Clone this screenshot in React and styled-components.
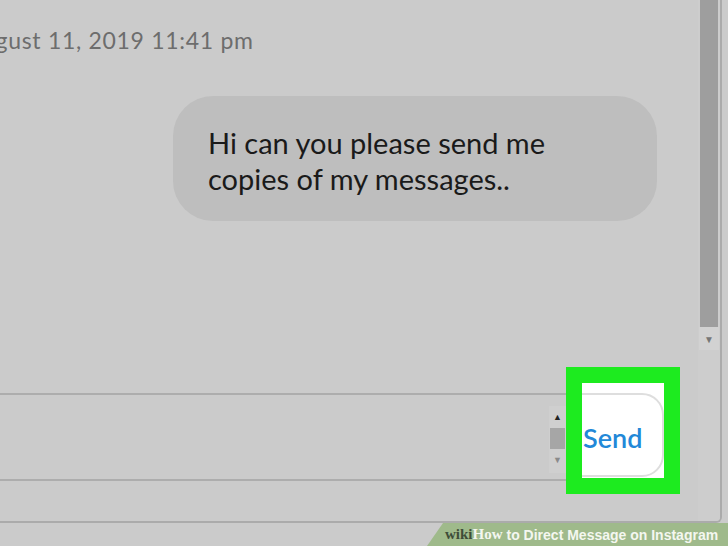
import React from "react";
import styled, { createGlobalStyle } from "styled-components";

const GlobalStyle = createGlobalStyle`
  html, body {
    margin: 0;
    padding: 0;
    background: #cbcbcb;
  }
  body {
    font-family: Lato, "Noto Sans", sans-serif;
  }
`;

const StPage = styled.div`
  width: 728px;
  height: 546px;
  overflow: hidden;
  display: flex;
  flex-direction: column;
  background: #cbcbcb;
`;

const StWindow = styled.div`
  width: 722px;
  height: 523px;
  box-sizing: border-box;
  display: flex;
  border-right: 2px solid #ababab;
  border-bottom: 2px solid #ababab;
  border-bottom-right-radius: 6px;
  overflow: hidden;
`;

const StMain = styled.div`
  flex: 1;
  min-width: 0;
  display: flex;
  flex-direction: column;
  overflow: hidden;
`;

const StDate = styled.div`
  margin: 25px 0 0 -34px;
  font-size: 23px;
  letter-spacing: 0.7px;
  line-height: 30px;
  color: #6d6d6d;
  white-space: nowrap;
`;

const StThread = styled.div`
  flex: 1;
  display: flex;
  flex-direction: column;
  align-items: flex-end;
  padding: 41px 41px 0 0;
`;

const StBubble = styled.div`
  width: 484px;
  box-sizing: border-box;
  padding: 29px 35px 24px;
  border-radius: 40px;
  background: #bebebe;
  color: #1a1a1a;
  font-size: 29px;
  line-height: 36px;
`;

const StComposer = styled.div`
  display: flex;
  align-items: center;
  padding-right: 18px;
  margin-bottom: 27px;
`;

const StInputField = styled.div`
  flex: 1;
  height: 88px;
  box-sizing: border-box;
  margin-top: 12px;
  border-top: 2px solid #adadad;
  border-bottom: 2px solid #adadad;
  display: flex;
  justify-content: flex-end;
  align-items: flex-start;
  padding-top: 11px;
`;

const StMiniScroll = styled.div`
  width: 17px;
  height: 67px;
  background: #cfcfcf;
  display: flex;
  flex-direction: column;
  align-items: center;
`;

const StArrow = styled.div`
  height: 22px;
  display: flex;
  align-items: center;
  justify-content: center;
  font-size: 9px;
  color: ${(p) => (p.$dark ? "#222" : "#8a8a8a")};
`;

const StMiniThumb = styled.div`
  width: 15px;
  height: 21px;
  background: #a6a6a6;
`;

const StHighlight = styled.div`
  width: 114px;
  height: 127px;
  box-sizing: border-box;
  border: 16px solid #1deb1f;
  background: #ffffff;
  overflow: hidden;
`;

const StSendButton = styled.div`
  width: 112px;
  height: 84px;
  box-sizing: border-box;
  margin: 10px 0 0 -30px;
  padding: 4px 0 0 29px;
  border: 2px solid #dedede;
  border-radius: 22px;
  display: flex;
  align-items: center;
  font-size: 27px;
  font-weight: 600;
  color: #2288d8;
`;

const StScrollbar = styled.div`
  width: 22px;
  display: flex;
  flex-direction: column;
  align-items: center;
  background: #cdcdcd;
`;

const StThumb = styled.div`
  width: 18px;
  height: 327px;
  background: #9e9e9e;
`;

const StScrollArrow = styled.div`
  width: 20px;
  height: 23px;
  display: flex;
  align-items: center;
  justify-content: center;
  font-size: 10px;
  color: #777;
  background: #d2d2d2;
`;

const StFooter = styled.div`
  flex: 1;
  display: flex;
  justify-content: flex-end;
`;

const StBanner = styled.div`
  width: 301px;
  display: flex;
  align-items: center;
  padding-left: 18px;
  box-sizing: border-box;
  background: #9fba8b;
  clip-path: polygon(16px 0, 100% 0, 100% 100%, 0 100%);
  white-space: nowrap;
`;

const StWiki = styled.span`
  font-family: "Liberation Serif", serif;
  font-weight: 700;
  font-size: 15px;
  color: ${(p) => (p.$light ? "#f4f7f0" : "#3e4d38")};
`;

const StCaption = styled.span`
  font-family: "Liberation Sans", Arial, sans-serif;
  font-size: 14px;
  font-weight: 700;
  color: #f4f7f0;
  margin-left: 4px;
`;

export default function App() {
  return (
    <>
      <GlobalStyle />
      <StPage>
        <StWindow>
          <StMain>
            <StDate>August 11, 2019 11:41 pm</StDate>
            <StThread>
              <StBubble>Hi can you please send me copies of my messages..</StBubble>
            </StThread>
            <StComposer>
              <StInputField>
                <StMiniScroll>
                  <StArrow $dark>▲</StArrow>
                  <StMiniThumb />
                  <StArrow>▼</StArrow>
                </StMiniScroll>
              </StInputField>
              <StHighlight>
                <StSendButton>Send</StSendButton>
              </StHighlight>
            </StComposer>
          </StMain>
          <StScrollbar>
            <StThumb />
            <StScrollArrow>▼</StScrollArrow>
          </StScrollbar>
        </StWindow>
        <StFooter>
          <StBanner>
            <StWiki>wiki</StWiki>
            <StWiki $light>How</StWiki>
            <StCaption>to Direct Message on Instagram</StCaption>
          </StBanner>
        </StFooter>
      </StPage>
    </>
  );
}
